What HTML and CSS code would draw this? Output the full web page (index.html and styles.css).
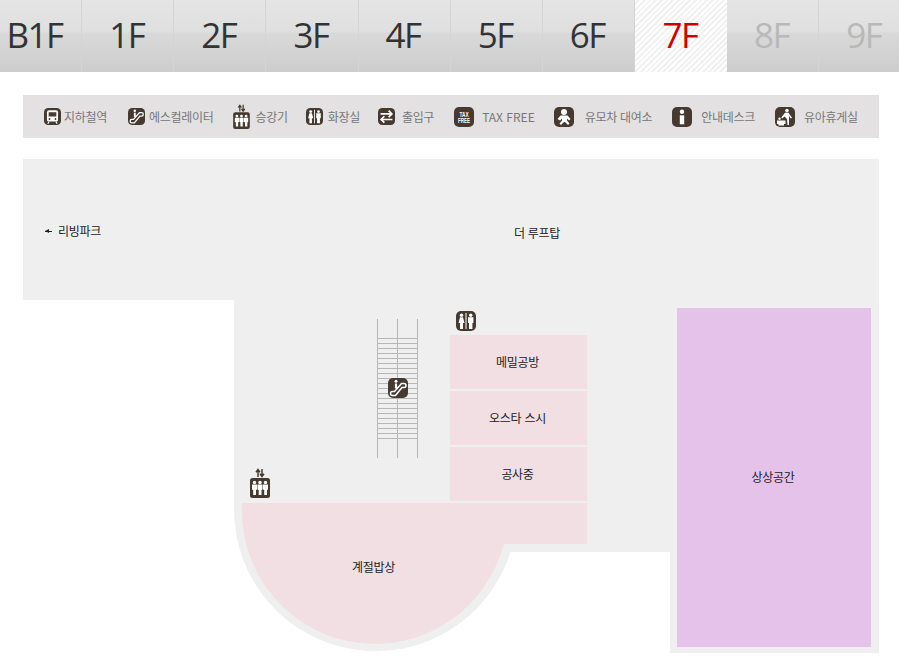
FILE: index.html
```html
<!DOCTYPE html>
<html lang="ko">
<head>
    <meta charset="UTF-8">
    <meta name="viewport" content="width=device-width, initial-scale=1.0">
    <title>7F 층별안내</title>
    <link rel="stylesheet" href="styles.css">
</head>
<body>

    <!-- Icon set -->
    <svg class="icon-defs" aria-hidden="true">
        <symbol id="i-subway" viewBox="0 0 20 20">
            <rect width="20" height="20" rx="5" fill="#463a30"/>
            <path d="M6 2.500h8a2.500 2.500 0 0 1 2.500 2.500V14a2 2 0 0 1-2 2H5.500a2 2 0 0 1-2-2V5A2.500 2.500 0 0 1 6 2.500z" fill="#fff"/>
            <rect x="5.500" y="5" width="9" height="5" fill="#463a30"/>
            <circle cx="6.500" cy="13" r="1.100" fill="#463a30"/>
            <circle cx="13.500" cy="13" r="1.100" fill="#463a30"/>
            <path d="M6 16l-1.500 2.500M14 16l1.500 2.500" stroke="#fff" stroke-width="1.300"/>
        </symbol>
        <symbol id="i-escalator" viewBox="0 0 20 20">
            <rect width="20" height="20" rx="5" fill="#463a30"/>
            <circle cx="8" cy="3.300" r="1.500" fill="#fff"/>
            <path d="M8 5.500v5" stroke="#fff" stroke-width="2.200"/>
            <path d="M4.500 17.500H7.500L14 9.500H16a2 2 0 0 0 0-4H13.500L6.500 13.500H4.500a2 2 0 0 0 0 4z" fill="none" stroke="#fff" stroke-width="1.500"/>
        </symbol>
        <symbol id="i-elevator" viewBox="0 0 20 30">
            <path d="M8 9V2M6 4.200L8 1.500L10 4.200M12 1V8M10 5.800L12 8.500L14 5.800" fill="none" stroke="#463a30" stroke-width="1.500"/>
            <rect y="10" width="20" height="20" rx="2.500" fill="#463a30"/>
            <g fill="#fff">
                <circle cx="4.500" cy="14.500" r="1.700"/>
                <circle cx="10" cy="14.500" r="1.700"/>
                <circle cx="15.500" cy="14.500" r="1.700"/>
                <path d="M2 16.500h5v5l-1 .5V27H3.200V22l-1.200-.5z"/>
                <path d="M7.500 16.500h5v5l-1 .5V27H8.700V22l-1.200-.5z"/>
                <path d="M13 16.500h5v5l-1 .5V27H14.200V22l-1.200-.5z"/>
            </g>
        </symbol>
        <symbol id="i-restroom" viewBox="0 0 20 20">
            <rect width="20" height="20" rx="5" fill="#463a30"/>
            <path d="M10 2v16" stroke="#fff" stroke-width="1"/>
            <g fill="#fff">
                <circle cx="5.500" cy="4.200" r="1.700"/>
                <path d="M4 6.300h3L8.500 12H7v6H4V12H2.500z"/>
                <circle cx="14.700" cy="4.200" r="1.700"/>
                <path d="M12 6.300h5.400V12h-1v6h-3.400V12h-1z"/>
            </g>
        </symbol>
        <symbol id="i-exit" viewBox="0 0 20 20">
            <rect width="20" height="20" rx="5" fill="#463a30"/>
            <path d="M3 7H16M12.500 3.200L16.300 7L12.500 10.800" fill="none" stroke="#fff" stroke-width="2"/>
            <path d="M17 13.500H4M7.500 9.700L3.700 13.500L7.500 17.300" fill="none" stroke="#fff" stroke-width="2"/>
        </symbol>
        <symbol id="i-tax" viewBox="0 0 20 20">
            <rect width="20" height="20" rx="5" fill="#463a30"/>
            <text class="tax-mark" x="10" y="9.500" textLength="9" lengthAdjust="spacingAndGlyphs">TAX</text>
            <text class="tax-mark" x="10" y="16" textLength="12" lengthAdjust="spacingAndGlyphs">FREE</text>
        </symbol>
        <symbol id="i-stroller" viewBox="0 0 20 20">
            <rect width="20" height="20" rx="5" fill="#463a30"/>
            <g fill="#fff">
                <circle cx="10" cy="5" r="3"/>
                <path d="M6.500 8.500h7l3 3.500-1.500 1.500-2-2v2l2.500 3-1.500 1.500-3-3h-1l-3 3-1.500-1.500 2.500-3v-2l-2 2L3.500 12z"/>
            </g>
        </symbol>
        <symbol id="i-info" viewBox="0 0 20 20">
            <rect width="20" height="20" rx="5" fill="#463a30"/>
            <circle cx="10" cy="4.800" r="2.200" fill="#fff"/>
            <rect x="7.800" y="8.300" width="4.400" height="9" fill="#fff"/>
        </symbol>
        <symbol id="i-nursing" viewBox="0 0 20 20">
            <rect width="20" height="20" rx="5" fill="#463a30"/>
            <g fill="#fff">
                <circle cx="12" cy="3.600" r="1.800"/>
                <path d="M10 5.800h3.500l3.500 5-1.200.8-1.800-2.300V18h-1.500l-.5-6-2.500-2.500-2.300 2-.9-1z"/>
                <path d="M2 13.500h8.500v3.500h-1.500v1.500H3.500V17H2z"/>
                <circle cx="4.500" cy="11.800" r="1.200"/>
            </g>
        </symbol>
    </svg>

    <!-- Floor tabs -->
    <nav class="floors">
        <a class="floor">B1F</a>
        <a class="floor">1F</a>
        <a class="floor">2F</a>
        <a class="floor">3F</a>
        <a class="floor">4F</a>
        <a class="floor">5F</a>
        <a class="floor">6F</a>
        <a class="floor floor-on">7F</a>
        <a class="floor floor-off">8F</a>
        <a class="floor floor-off">9F</a>
    </nav>

    <!-- Legend -->
    <ul class="legend">
        <li class="legend-item mr-3"><svg class="ico ico-s gap-3"><use href="#i-subway"/></svg>지하철역</li>
        <li class="legend-item mr-2"><svg class="ico ico-s gap-4"><use href="#i-escalator"/></svg>에스컬레이터</li>
        <li class="legend-item"><svg class="ico ico-lift gap-5"><use href="#i-elevator"/></svg>승강기</li>
        <li class="legend-item"><svg class="ico ico-s gap-5"><use href="#i-restroom"/></svg>화장실</li>
        <li class="legend-item mr-2"><svg class="ico ico-s gap-7"><use href="#i-exit"/></svg>출입구</li>
        <li class="legend-item legend-latin mr-1"><svg class="ico gap-8"><use href="#i-tax"/></svg>TAX FREE</li>
        <li class="legend-item mr-2"><svg class="ico gap-11"><use href="#i-stroller"/></svg>유모차 대여소</li>
        <li class="legend-item mr-2"><svg class="ico gap-9"><use href="#i-info"/></svg>안내데스크</li>
        <li class="legend-item"><svg class="ico gap-9"><use href="#i-nursing"/></svg>유아휴게실</li>
    </ul>

    <!-- Floor plan -->
    <div class="map">
        <svg class="plan" viewBox="23 159 856 494">
            <path class="plan-floor" d="M23 159H879V653H670V552H510.500A141.500 141.500 0 0 1 234 511V300H23Z"/>
            <path class="plan-shop" d="M242 503H587V544H503.800A133 133 0 0 1 242 511Z"/>
            <path class="plan-rail" d="M377.500 319V458M397.500 319V458M417.500 319V458"/>
            <path class="plan-rail" d="M378 338.500H417M378 343.500H417M378 348.500H417M378 353.500H417M378 358.500H417M378 363.500H417M378 368.500H417M378 373.500H417M378 378.500H417M378 383.500H417M378 388.500H417M378 393.500H417M378 398.500H417M378 403.500H417M378 408.500H417M378 413.500H417M378 418.500H417M378 423.500H417M378 428.500H417M378 433.500H417M378 438.500H417"/>
        </svg>

        <div class="shop shop-1">메밀공방</div>
        <div class="shop shop-2">오스타 스시</div>
        <div class="shop shop-3">공사중</div>
        <div class="shop shop-purple">상상공간</div>

        <span class="label label-living"><i class="arrow"></i>리빙파크</span>
        <span class="label label-roof">더 루프탑</span>
        <span class="label label-season">계절밥상</span>

        <svg class="ico pin pin-restroom"><use href="#i-restroom"/></svg>
        <svg class="ico pin pin-escalator"><use href="#i-escalator"/></svg>
        <svg class="pin pin-elevator"><use href="#i-elevator"/></svg>
    </div>

</body>
</html>
```

FILE: styles.css
```css
/* Base */
body {
    margin: 0;
    background: #fff;
    font-family: "Noto Sans CJK KR", "Noto Sans", sans-serif;
    font-size: 12px;
    letter-spacing: -0.3px;
    color: #222;
    overflow: hidden;
}

.icon-defs {
    display: none;
}

/* Floor tabs */
.floors {
    display: flex;
    height: 72px;
    margin-left: -10px;
    overflow: hidden;
}

.floor {
    flex: 0 0 92.125px;
    box-sizing: border-box;
    padding-right: 2px;
    border-right: 1px solid #d4d4d4;
    background: linear-gradient(to bottom, #e5e5e5 0, #dfdfdf 32px, #d9d9d9 33px, #cdcdcd 100%);
    font-family: "Open Sans", sans-serif;
    font-size: 35px;
    letter-spacing: -1.5px;
    line-height: 70px;
    text-align: center;
    color: #333;
}

.floor-on {
    border-right: 0;
    background: repeating-linear-gradient(135deg, #fff 0, #fff 2px, #f1f1f1 2px, #f1f1f1 4px);
    color: #cc0000;
}

.floor-off {
    color: #b9b9b9;
}

/* Legend */
.legend {
    display: flex;
    align-items: center;
    gap: 18px;
    box-sizing: border-box;
    height: 43px;
    margin: 23px 20px 0 23px;
    padding: 0 0 0 21px;
    list-style: none;
    background: #e3e1e2;
    color: #777;
    white-space: nowrap;
}

.legend-item {
    display: flex;
    align-items: center;
    line-height: 18px;
}

.legend-latin {
    letter-spacing: 0;
}

.mr-1 { margin-right: 1px; }
.mr-2 { margin-right: 2px; }
.mr-3 { margin-right: 3px; }

.ico {
    flex: none;
    width: 20px;
    height: 20px;
}

.ico-s {
    width: 17px;
    height: 17px;
}

.ico-lift {
    width: 17px;
    height: 25px;
}

.gap-3 { margin-right: 3px; }
.gap-4 { margin-right: 4px; }
.gap-5 { margin-right: 5px; }
.gap-7 { margin-right: 7px; }
.gap-8 { margin-right: 8px; }
.gap-9 { margin-right: 9px; }
.gap-11 { margin-right: 11px; }

.tax-mark {
    font-family: "Liberation Sans", sans-serif;
    font-size: 8px;
    font-weight: 700;
    text-anchor: middle;
    fill: #fff;
}

/* Floor plan, the page coordinates minus 23 / 159 */
.map {
    position: relative;
    width: 856px;
    height: 494px;
    margin: 21px 0 0 23px;
}

.plan {
    display: block;
    width: 856px;
    height: 494px;
}

.plan-floor {
    fill: #efefef;
}

.plan-shop {
    fill: #f1dfe3;
}

.plan-rail {
    fill: none;
    stroke: #b7b7b7;
    stroke-width: 1;
}

.shop {
    position: absolute;
    display: flex;
    justify-content: center;
    align-items: center;
    box-sizing: border-box;
    padding: 0 2px 2px 0;
    background: #f1dfe3;
}

.shop-1,
.shop-2,
.shop-3 {
    left: 427px;
    width: 137px;
    height: 54px;
}

.shop-1 { top: 176px; }
.shop-2 { top: 232px; }
.shop-3 { top: 288px; }

.shop-purple {
    left: 654px;
    top: 149px;
    width: 194px;
    height: 339px;
    background: #e4c2ea;
}

.label {
    position: absolute;
    line-height: 16px;
    white-space: nowrap;
}

.label-living {
    left: 22px;
    top: 64px;
    display: flex;
    align-items: center;
}

.label-roof {
    left: 491px;
    top: 66px;
}

.label-season {
    left: 329px;
    top: 400px;
}

/* Small arrow before the link to the next building */
.arrow {
    position: relative;
    width: 7px;
    height: 1px;
    margin-right: 6px;
    background: #222;
}

.arrow::before {
    content: "";
    position: absolute;
    left: 0;
    top: -2px;
    border-top: 2.5px solid transparent;
    border-bottom: 2.5px solid transparent;
    border-right: 4px solid #222;
}

.pin {
    position: absolute;
}

.pin-restroom {
    left: 433px;
    top: 152px;
}

.pin-escalator {
    left: 365px;
    top: 219px;
}

.pin-elevator {
    left: 227px;
    top: 309px;
    width: 20px;
    height: 30px;
}
```
